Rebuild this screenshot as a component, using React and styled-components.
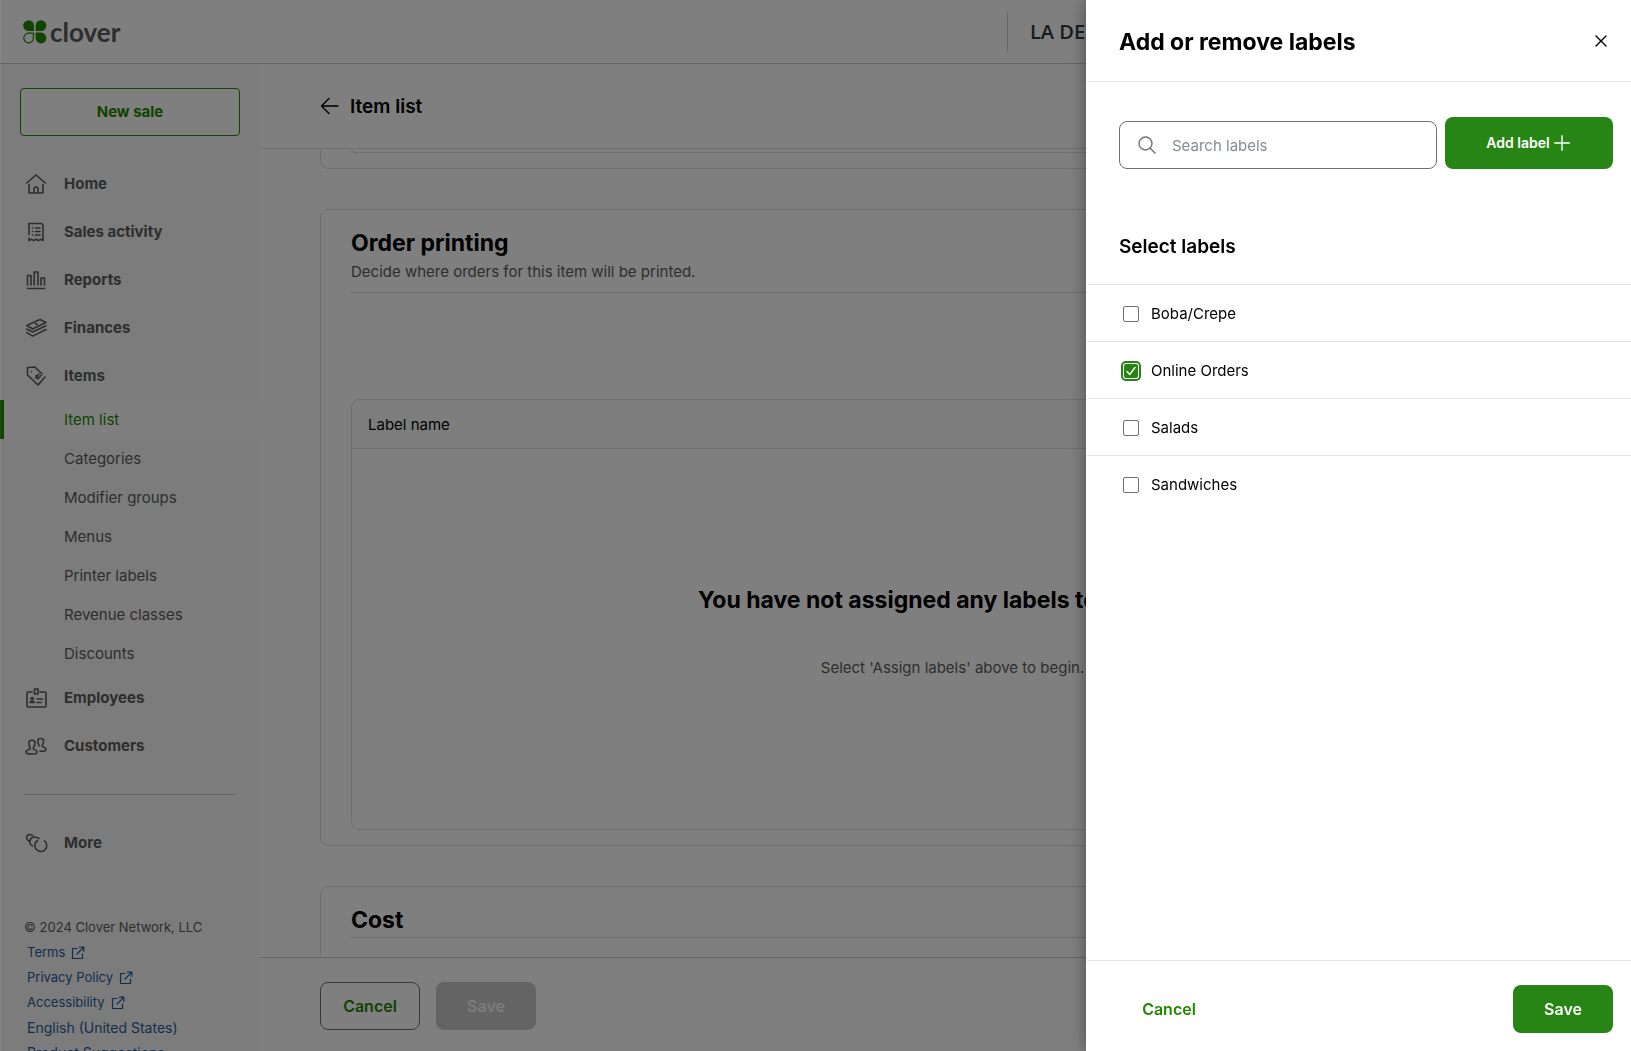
import React, { useState } from "react";
import styled, { createGlobalStyle } from "styled-components";

const GlobalStyle = createGlobalStyle`
  * {
    box-sizing: border-box;
  }
  body {
    margin: 0;
    overflow: hidden;
    font-family: Inter, "Liberation Sans", sans-serif;
    font-size: 15px;
    line-height: 24px;
    color: #000;
    background: #fff;
  }
  button, input {
    font: inherit;
  }
  h1, h2, h3, p, ul {
    margin: 0;
    padding: 0;
  }
`;

const Page = styled.div`
  display: flex;
  flex-direction: column;
  height: 100vh;
`;

const Header = styled.header`
  display: flex;
  justify-content: space-between;
  align-items: center;
  flex: none;
  height: 64px;
  padding-left: 23px;
  border-bottom: 1px solid #ccc;
`;

const Logo = styled.a`
  display: flex;
  align-items: center;
  gap: 3px;
  color: #5c5c5c;
  font-family: Lato, sans-serif;
  font-size: 26px;
  font-weight: 700;
  line-height: 32px;
  text-decoration: none;
`;

const Merchant = styled.div`
  display: flex;
  align-items: center;
  width: 624px;
  height: 40px;
  padding-left: 22px;
  border-left: 1px solid #ccc;
  color: #2f3a40;
  font-family: "Open Sans", sans-serif;
  font-size: 20px;
  font-weight: 600;
`;

const Body = styled.div`
  display: flex;
  flex: 1;
  min-height: 0;
`;

const Sidebar = styled.nav`
  flex: none;
  width: 260px;
  padding-top: 24px;
  overflow: hidden;
  background: #f8f8f8;
`;

const NewSale = styled.button`
  display: block;
  width: 220px;
  height: 48px;
  margin: 0 20px 24px;
  border: 1px solid #228800;
  border-radius: 4px;
  background: #fff;
  color: #228800;
  font-size: 15px;
  font-weight: 700;
`;

const NavList = styled.ul`
  list-style: none;
`;

const SubList = styled(NavList)`
  padding-bottom: 1px;
`;

const NavLink = styled.a`
  display: flex;
  align-items: center;
  gap: 16px;
  height: 48px;
  padding-left: 24px;
  color: #5c5c5c;
  font-size: 15px;
  font-weight: 700;
  text-decoration: none;
`;

const SubLink = styled.a`
  display: flex;
  align-items: center;
  height: 39px;
  padding-left: 60px;
  border-left: 4px solid ${(props) => (props.$active ? "#228800" : "transparent")};
  background: ${(props) => (props.$active ? "#fff" : "transparent")};
  color: ${(props) => (props.$active ? "#228800" : "#5c5c5c")};
  text-decoration: none;
`;

const Divider = styled.hr`
  width: 212px;
  margin: 24px;
  border: 0;
  border-top: 1px solid #ccc;
`;

const Legal = styled.div`
  display: flex;
  flex-direction: column;
  margin-top: 48px;
  padding-left: 24px;
  color: #5c5c5c;
  font-size: 13px;
  line-height: 25px;
`;

const LegalLink = styled.a`
  display: flex;
  align-items: center;
  gap: 6px;
  padding-left: 3px;
  color: #1d609c;
  font-size: ${(props) => (props.$external ? "13px" : "14px")};
  text-decoration: none;
`;

const Main = styled.main`
  display: flex;
  flex: 1;
  flex-direction: column;
  min-width: 0;
`;

const TitleBar = styled.div`
  display: flex;
  align-items: center;
  gap: 10px;
  flex: none;
  height: 85px;
  padding-left: 60px;
  border-bottom: 1px solid #dedede;

  h1 {
    padding-top: 2px;
    font-size: 19px;
    font-weight: 600;
  }
`;

const BackButton = styled.button`
  display: flex;
  padding: 0;
  border: 0;
  background: none;
`;

const Content = styled.div`
  flex: 1;
  min-height: 0;
  padding: 0 46px 0 60px;
  overflow: hidden;
`;

const Card = styled.section`
  margin-bottom: 40px;
  padding: 16px 30px 15px;
  border: 1px solid #dedede;
  border-radius: 8px;
`;

const CardEnd = styled(Card)`
  height: 20px;
  padding-top: 0;
  border-top: 0;
  border-radius: 0 0 8px 8px;
`;

const InnerEnd = styled.div`
  height: 4px;
  border: 1px solid #dedede;
  border-top: 0;
  border-radius: 0 0 8px 8px;
`;

const CardHead = styled.div`
  border-bottom: 1px solid #dedede;

  h2 {
    font-size: 23px;
    font-weight: 700;
    line-height: 34px;
  }
  p {
    padding-bottom: 8px;
    color: #5c5c5c;
  }
`;

const CostBody = styled.div`
  height: 160px;
`;

const LabelTable = styled.table`
  width: 100%;
  margin-top: 106px;
  border: 1px solid #dedede;
  border-radius: 8px;
  border-spacing: 0;

  th {
    height: 49px;
    padding: 2px 16px 0;
    border-bottom: 1px solid #dedede;
    border-radius: 8px 8px 0 0;
    background: #fafafa;
    font-weight: 400;
    text-align: left;
  }
  td {
    height: 380px;
    padding: 0;
    text-align: center;
  }
`;

const Empty = styled.div`
  display: flex;
  flex-direction: column;
  align-items: center;
  gap: 40px;
  padding-bottom: 15px;

  h3 {
    font-size: 23px;
    font-weight: 700;
    line-height: 32px;
  }
  p {
    color: #5c5c5c;
  }
`;

const ActionBar = styled.div`
  display: flex;
  align-items: flex-start;
  gap: 16px;
  flex: none;
  height: 94px;
  padding: 24px 60px 0;
  border-top: 1px solid #ccc;
`;

const Button = styled.button`
  width: 100px;
  height: 48px;
  padding: 0;
  border: 1px solid ${(props) => (props.$outline ? "#707070" : "transparent")};
  border-radius: 8px;
  background: ${(props) => (props.$filled ? "#278515" : "transparent")};
  color: ${(props) => (props.$filled ? "#fff" : "#228800")};
  font-size: 16px;
  font-weight: 600;

  &:disabled {
    background: #c8c8c8;
    color: #f8f8f8;
  }
`;

const Overlay = styled.div`
  position: fixed;
  inset: 0;
  background: rgba(0, 0, 0, 0.5);
  box-shadow: inset 1px 0 rgba(255, 255, 255, 0.06);
`;

const Drawer = styled.aside`
  position: fixed;
  top: 0;
  right: 0;
  bottom: 0;
  display: flex;
  flex-direction: column;
  width: 545px;
  padding-left: 1px;
  background: #fff;
  box-shadow: 0 0 16px rgba(0, 0, 0, 0.4);
`;

const DrawerHead = styled.div`
  display: flex;
  justify-content: space-between;
  align-items: center;
  flex: none;
  height: 82px;
  padding: 0 24px 0 32px;
  border-bottom: 1px solid #e2e2e2;

  h2 {
    padding-top: 2px;
    font-size: 23px;
    font-weight: 700;
    line-height: 32px;
  }
`;

const CloseButton = styled.button`
  display: flex;
  padding: 0;
  border: 0;
  background: none;
`;

const SearchRow = styled.div`
  display: flex;
  align-items: flex-end;
  gap: 8px;
  margin: 35px 18px 0 32px;
`;

const SearchBox = styled.label`
  display: flex;
  align-items: center;
  gap: 16px;
  flex: 1;
  height: 48px;
  padding: 0 18px;
  border: 1px solid #707070;
  border-radius: 8px;

  input {
    flex: 1;
    min-width: 0;
    padding: 2px 0 0;
    border: 0;
    outline: 0;
    background: none;
  }
  input::placeholder {
    color: #858c90;
  }
`;

const AddButton = styled.button`
  display: flex;
  justify-content: center;
  align-items: center;
  gap: 4px;
  width: 168px;
  height: 52px;
  padding: 0 2px 0 0;
  border: 0;
  border-radius: 8px;
  background: #278515;
  color: #fff;
  font-size: 14px;
  font-weight: 600;
`;

const ListTitle = styled.h3`
  margin: 66px 0 25px 32px;
  font-size: 19px;
  font-weight: 600;
`;

const LabelRow = styled.label`
  display: flex;
  align-items: center;
  gap: 10px;
  height: 57px;
  padding: 1px 0 0 34px;
  border-top: 1px solid #e2e2e2;
`;

const Tick = styled.span`
  display: grid;
  place-items: center;
  width: 20px;
  height: 20px;

  input,
  svg {
    grid-area: 1 / 1;
  }
  svg {
    pointer-events: none;
  }
  input {
    width: 16px;
    height: 16px;
    margin: 0;
    border: 1px solid #707070;
    border-radius: 2px;
    appearance: none;
    background: #fff;
  }
  input:checked {
    width: 14px;
    height: 14px;
    border: 0;
    background: #278515;
    box-shadow: 0 0 0 1px #fff, 0 0 0 3px #278515;
  }
`;

const DrawerFoot = styled.div`
  display: flex;
  justify-content: space-between;
  align-items: flex-start;
  flex: none;
  height: 91px;
  margin-top: auto;
  padding: 24px 18px 0 32px;
  border-top: 1px solid #e2e2e2;
`;

const Svg = ({ size = 24, width = 1.4, children }) => (
  <svg
    width={size}
    height={size}
    viewBox={`0 0 ${size} ${size}`}
    fill="none"
    stroke="currentColor"
    strokeWidth={width}
    strokeLinecap="round"
    strokeLinejoin="round"
    aria-hidden="true"
  >
    {children}
  </svg>
);

const CloverMark = () => (
  <svg width="24" height="24" viewBox="0 0 24 24" fill="#228800" aria-hidden="true">
    <path d="M11 11H5.6A5.4 5.4 0 1 1 11 5.6z" />
    <path d="M12.6 11V5.6A5.4 5.4 0 1 1 18 11z" />
    <path d="M12.6 12.6H18A5.4 5.4 0 1 1 12.6 18z" />
    <path
      d="M10.4 13.2V18a4.8 4.8 0 1 1-4.8-4.8z"
      fill="none"
      stroke="#228800"
      strokeWidth="1.2"
    />
  </svg>
);

const icons = {
  Home: (
    <Svg width={1.6}>
      <path d="M2.7 11 12 3l9.3 8M5 12.5V21h14v-8.5M10 21v-4a2 2 0 0 1 4 0v4" />
    </Svg>
  ),
  "Sales activity": (
    <Svg width={1.6}>
      <path d="M5 14.5V3.5h12.5l1.5 1.500v15.500l-2.300-1.300-2.300 1.500-2.400-1.500-2.300 1.500-2.300-1.500L5 20.500v-2.500" />
      <path d="M8.500 8h.3M11.500 8H16M8.500 11.500h.3M11.500 11.500H16M8.500 15h.3M11.500 15H16" />
    </Svg>
  ),
  Reports: (
    <Svg width={1.6}>
      <path d="M3.500 17V7.500H7V17M10.200 17V4H14v13M17 17v-7h3.500v7M3.500 20.500h17" />
    </Svg>
  ),
  Finances: (
    <Svg width={1.5}>
      <path d="M2.700 9.500 16 3.500l6 3-13.300 6.500zM2.700 13l6 3L22 9.800M2.700 16.500l6 3.700L22 13.500M11.500 7.500l2 1.200" />
    </Svg>
  ),
  Items: (
    <Svg width={1.6}>
      <path d="m18 10-7-7-7.500.5V11L14 21l7-8M7.500 7.500h.01M11.500 14l3.500-4M13.500 15l3.500-3.500M12 11.500l2.500 3" />
    </Svg>
  ),
  Employees: (
    <Svg width={1.6}>
      <path d="M8 6H4a1 1 0 0 0-1 1v13a1 1 0 0 0 1 1h17a1 1 0 0 0 1-1V7a1 1 0 0 0-1-1h-5M10.500 3h3.500v5h-3.500zM6 16.500c.5-2 4-2 4.500 0zM13 13h5.500M13 16.500H17" />
      <circle cx="8.200" cy="12.500" r="1" fill="currentColor" />
    </Svg>
  ),
  Customers: (
    <Svg width={1.6}>
      <path d="M5 8.500C5 5.500 11 5.500 11 8.500c0 2.500-.5 4-1.500 4.700V15c1.500.7 3.500 1 3.500 3s-1.500 2-5 2-6 0-6-2 2.500-2.300 4-3v-1.800C5 12.500 5 11 5 8.500z" />
      <path d="M15 12v-1c-1-.8-1.200-2-1.200-4.300 0-3 5.800-3 5.800 0 0 2.300-.2 3.600-1.300 4.300v1.500c1.500.7 3.700 1 3.700 2.800s-1.500 2-6 1.900" />
    </Svg>
  ),
  More: (
    <Svg width={1.6}>
      <path d="M5 10C.500 8 3 1 8.500 4.500M8.500 15C2.500 12 7 2.500 15 7.500" />
      <path d="M20.500 9.800A6 6 0 1 1 13.500 9.500" />
    </Svg>
  ),
};

const External = () => (
  <Svg size={14} width={1.2}>
    <path d="M6 2.500H1.500v10h10V8M8.500 1.200h4.300v4.300M12.500 1.500 6 8" />
  </Svg>
);

const subItems = [
  "Item list",
  "Categories",
  "Modifier groups",
  "Menus",
  "Printer labels",
  "Revenue classes",
  "Discounts",
];

const legalLinks = [
  { text: "Terms", external: true },
  { text: "Privacy Policy", external: true },
  { text: "Accessibility", external: true },
  { text: "English (United States)" },
  { text: "Product Suggestions" },
];

const labels = ["Boba/Crepe", "Online Orders", "Salads", "Sandwiches"];

const NavItem = ({ name, children }) => (
  <li>
    <NavLink href="#">
      {icons[name]}
      {name}
    </NavLink>
    {children}
  </li>
);

const SideNav = () => (
  <Sidebar>
    <NewSale>New sale</NewSale>
    <NavList>
      <NavItem name="Home" />
      <NavItem name="Sales activity" />
      <NavItem name="Reports" />
      <NavItem name="Finances" />
      <NavItem name="Items">
        <SubList>
          {subItems.map((item) => (
            <li key={item}>
              <SubLink href="#" $active={item === "Item list"}>
                {item}
              </SubLink>
            </li>
          ))}
        </SubList>
      </NavItem>
      <NavItem name="Employees" />
      <NavItem name="Customers" />
    </NavList>
    <Divider />
    <NavList>
      <NavItem name="More" />
    </NavList>
    <Legal>
      <span>© 2024 Clover Network, LLC</span>
      {legalLinks.map((link) => (
        <LegalLink key={link.text} href="#" $external={link.external}>
          {link.text}
          {link.external && <External />}
        </LegalLink>
      ))}
    </Legal>
  </Sidebar>
);

const LabelsDrawer = () => {
  const [selected, setSelected] = useState(["Online Orders"]);
  const toggle = (label) =>
    setSelected(
      selected.includes(label)
        ? selected.filter((l) => l !== label)
        : [...selected, label]
    );

  return (
    <Drawer>
      <DrawerHead>
        <h2>Add or remove labels</h2>
        <CloseButton aria-label="Close">
          <Svg size={12}>
            <path d="m1 1 10 10M11 1 1 11" />
          </Svg>
        </CloseButton>
      </DrawerHead>
      <SearchRow>
        <SearchBox>
          <Svg size={18}>
            <circle cx="7.500" cy="7.500" r="6.500" stroke="#707070" />
            <path d="m12.300 12.300 4.700 4.700" stroke="#707070" />
          </Svg>
          <input type="text" placeholder="Search labels" aria-label="Search labels" />
        </SearchBox>
        <AddButton>
          Add label
          <Svg size={16}>
            <path d="M8 .7v14.600M.7 8h14.600" />
          </Svg>
        </AddButton>
      </SearchRow>
      <ListTitle>Select labels</ListTitle>
      {labels.map((label) => (
        <LabelRow key={label}>
          <Tick>
            <input
              type="checkbox"
              checked={selected.includes(label)}
              onChange={() => toggle(label)}
            />
            {selected.includes(label) && (
              <Svg size={14}>
                <path d="m3 7.500 2.700 3L11 3.500" stroke="#fff" />
              </Svg>
            )}
          </Tick>
          {label}
        </LabelRow>
      ))}
      <DrawerFoot>
        <Button>Cancel</Button>
        <Button $filled>Save</Button>
      </DrawerFoot>
    </Drawer>
  );
};

const App = () => (
  <>
    <GlobalStyle />
    <Page>
      <Header>
        <Logo href="#">
          <CloverMark />
          clover
        </Logo>
        <Merchant>LA DELI</Merchant>
      </Header>
      <Body>
        <SideNav />
        <Main>
          <TitleBar>
            <BackButton aria-label="Back">
              <Svg size={20}>
                <path d="M18 10H2M9 2.500 1.500 10 9 17.500" />
              </Svg>
            </BackButton>
            <h1>Item list</h1>
          </TitleBar>
          <Content>
            <CardEnd>
              <InnerEnd />
            </CardEnd>
            <Card>
              <CardHead>
                <h2>Order printing</h2>
                <p>Decide where orders for this item will be printed.</p>
              </CardHead>
              <LabelTable>
                <thead>
                  <tr>
                    <th>Label name</th>
                  </tr>
                </thead>
                <tbody>
                  <tr>
                    <td>
                      <Empty>
                        <h3>You have not assigned any labels to this item.</h3>
                        <p>Select 'Assign labels' above to begin.</p>
                      </Empty>
                    </td>
                  </tr>
                </tbody>
              </LabelTable>
            </Card>
            <Card>
              <CardHead>
                <h2>Cost</h2>
              </CardHead>
              <CostBody />
            </Card>
          </Content>
          <ActionBar>
            <Button $outline>Cancel</Button>
            <Button disabled>Save</Button>
          </ActionBar>
        </Main>
      </Body>
    </Page>
    <Overlay />
    <LabelsDrawer />
  </>
);

export default App;
